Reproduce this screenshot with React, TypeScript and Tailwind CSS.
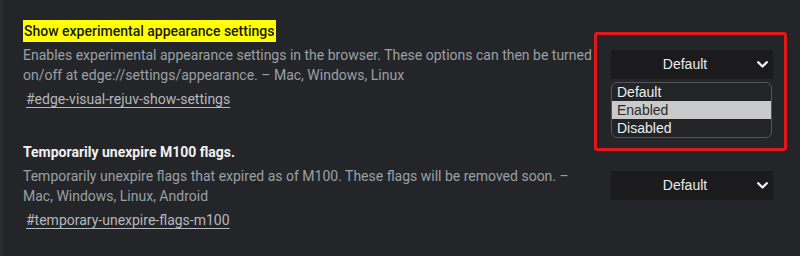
import React from "react";

function Chevron() {
  return (
    <svg width="11" height="7" viewBox="0 0 11 7" className="ml-[6px] shrink-0">
      <path d="M1.2 1.2 L5.5 5.5 L9.8 1.2" fill="none" stroke="#f2f2f2" strokeWidth="2.3" strokeLinecap="round" strokeLinejoin="round" />
    </svg>
  );
}

function Select() {
  return (
    <div className="flex h-[29px] w-[162px] items-center bg-[#1b1b1d] pl-[8px] pr-[5px] font-['Liberation_Sans',Arial,sans-serif] text-[14px] text-[#ececec]">
      <span className="flex-1 text-center">Default</span>
      <Chevron />
    </div>
  );
}

function Flag({ title, highlight, desc, link, children }: { title: string; highlight?: boolean; desc: string; link: string; children?: React.ReactNode }) {
  return (
    <div className="flex">
      <div className="w-[572px] shrink-0">
        <div className="h-[22px] leading-[22px]">
          {highlight ? (
            <span className="inline-block bg-[#ffff00] pl-[1px] pr-[2px] font-medium text-[#1a1a1a]">{title}</span>
          ) : (
            <span className="font-bold text-[#f1f1f1]">{title}</span>
          )}
        </div>
        <p className="mt-[3px] leading-[20px] text-[#9aa0a6]">{desc}</p>
        <div className="mt-[4px] pl-[3px] leading-[20px]">
          <span className="text-[#b5b8bc] underline underline-offset-[3px]">{link}</span>
        </div>
      </div>
      <div className="pl-[16px] pt-[30px]">{children}</div>
    </div>
  );
}

export default function App() {
  return (
    <div className="h-[256px] w-[800px] overflow-hidden border-l-[3px] border-[#2b2c30] bg-[#242528] pl-[20px] pt-[20px] font-['Roboto',sans-serif] text-[14px]">
      <div className="flex flex-col gap-[32px]">
        <Flag
          highlight
          title="Show experimental appearance settings"
          desc="Enables experimental appearance settings in the browser. These options can then be turned on/off at edge://settings/appearance. – Mac, Windows, Linux"
          link="#edge-visual-rejuv-show-settings"
        >
          <div className="relative">
            <Select />
            <div className="absolute left-0 top-[32px] w-[161px] overflow-hidden rounded-[6px] border border-[#55565a] bg-[#232427] font-['Liberation_Sans',Arial,sans-serif] text-[14px] leading-[18px]">
              <div className="pl-[5px] text-[#f0f0f0]">Default</div>
              <div className="bg-[#cacaca] pl-[5px] text-[#2a2a2a]">Enabled</div>
              <div className="pl-[5px] text-[#f0f0f0]">Disabled</div>
            </div>
            <div className="pointer-events-none absolute left-[-17px] top-[-18px] h-[119px] w-[193px] rounded-[3px] border-[3px] border-[#e3161b]" />
          </div>
        </Flag>
        <Flag
          title="Temporarily unexpire M100 flags."
          desc="Temporarily unexpire flags that expired as of M100. These flags will be removed soon. – Mac, Windows, Linux, Android"
          link="#temporary-unexpire-flags-m100"
        >
          <Select />
        </Flag>
      </div>
    </div>
  );
}
